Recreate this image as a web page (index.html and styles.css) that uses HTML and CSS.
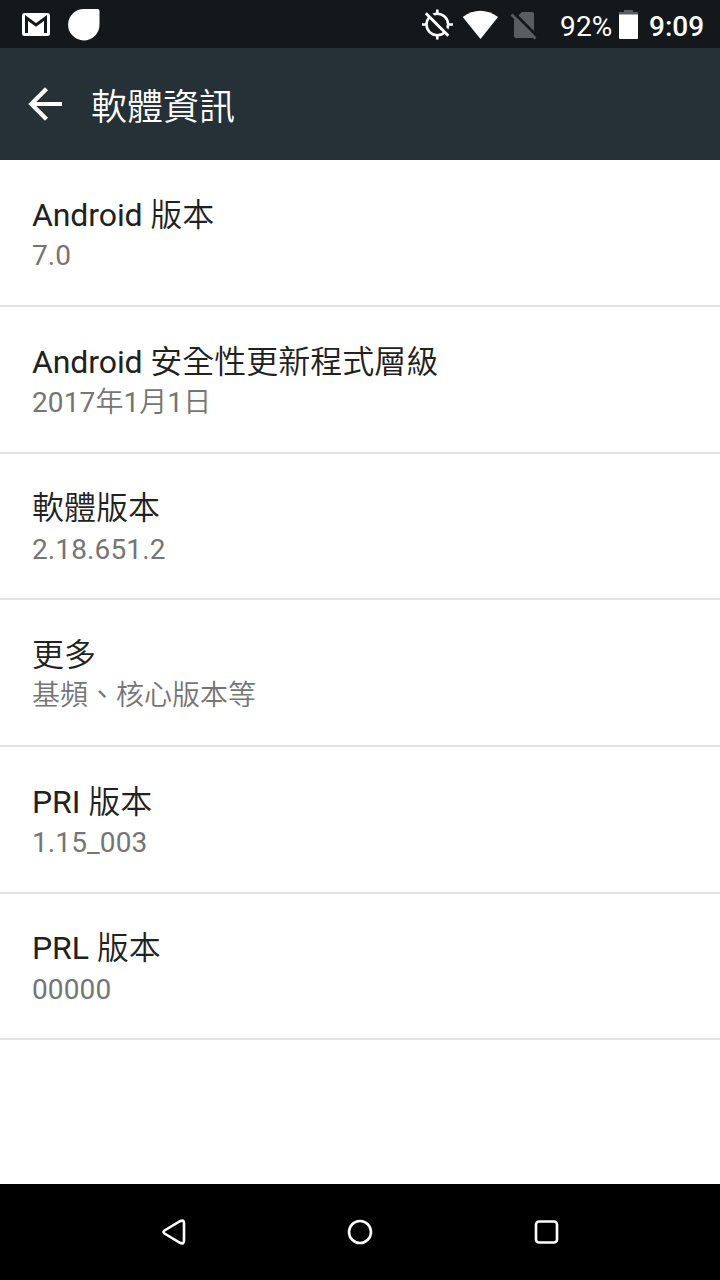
FILE: index.html
```
<!DOCTYPE html>
<html lang="zh-Hant">
<head>
<meta charset="utf-8">
<title>軟體資訊</title>
<link rel="stylesheet" href="styles.css">
</head>
<body>
<div class="screen">
  <header class="status-bar">
    <svg class="status-icons" width="110" height="48" viewBox="0 0 110 48">
      <rect x="22" y="13" width="28" height="23" rx="2.500" fill="#fff"/>
      <path d="M26.500 33V18L36 25L45.500 18V33" fill="none" stroke="#14181b" stroke-width="3"/>
      <path d="M84 9H97.500Q99.500 9 99.500 11V25A15.700 15.700 0 1 1 84 9Z" fill="#fff"/>
    </svg>
    <div class="status-right">
      <svg class="status-icons" width="130" height="48" viewBox="0 0 130 48">
        <g fill="none" stroke="#fff" stroke-width="2.600">
          <circle cx="17.300" cy="24.500" r="10.800"/>
          <path d="M17.300 9.500V14M17.300 35V39.500M2 24.500H7M28 24.500H33"/>
        </g>
        <path d="M7 11L30 34" stroke="#14181b" stroke-width="4"/>
        <path d="M5.800 13.200L28.300 35.700" stroke="#fff" stroke-width="2.800"/>
        <path d="M42.700 17Q60.300 4.500 78 17L60.500 39Z" fill="#fff"/>
        <path d="M102 12H112Q114 12 114 14V36Q114 38 112 38H96Q94 38 94 36V20Z" fill="#5b5e60"/>
        <path d="M93.500 12.500L118 37" stroke="#14181b" stroke-width="3"/>
        <path d="M91.500 14.500L115.500 38.500" stroke="#5b5e60" stroke-width="2.600"/>
      </svg>
      <span class="battery-level">92%</span>
      <svg class="battery" width="20" height="48" viewBox="0 0 20 48">
        <path d="M5 10H14V12H19V15H0V12H5Z" fill="#5b5e60"/>
        <path d="M0 14.500H19V38Q19 39 18 39H1Q0 39 0 38Z" fill="#fff"/>
      </svg>
      <span class="clock">9:09</span>
    </div>
  </header>
  <div class="app-bar">
    <svg class="back" width="36" height="36" viewBox="0 0 36 36">
      <path d="M34 18H4M18.500 2.800L3.300 18L18.500 33.200" fill="none" stroke="#fff" stroke-width="4.200"/>
    </svg>
    <h1 class="title">軟體資訊</h1>
  </div>
  <main class="list">
    <section class="row"><div class="name">Android <span class="han">版本</span></div><div class="value">7.0</div></section>
    <section class="row"><div class="name">Android <span class="han">安全性更新程式層級</span></div><div class="value">2017<span class="han">年</span>1<span class="han">月</span>1<span class="han">日</span></div></section>
    <section class="row"><div class="name"><span class="han">軟體版本</span></div><div class="value">2.18.651.2</div></section>
    <section class="row"><div class="name"><span class="han">更多</span></div><div class="value"><span class="han">基頻、核心版本等</span></div></section>
    <section class="row"><div class="name">PRI <span class="han">版本</span></div><div class="value">1.15_003</div></section>
    <section class="row"><div class="name">PRL <span class="han">版本</span></div><div class="value">00000</div></section>
  </main>
  <nav class="nav-bar">
    <svg class="nav-icon" width="28" height="28" viewBox="0 0 28 28"><path d="M4.500 12.500L20 3.200Q24 1.500 24 5V23Q24 26.500 20 24.800L4.500 15.500Q2.500 14 4.500 12.500Z"/></svg>
    <svg class="nav-icon" width="28" height="28" viewBox="0 0 28 28"><circle cx="14" cy="14" r="11"/></svg>
    <svg class="nav-icon" width="28" height="28" viewBox="0 0 28 28"><rect x="3" y="3.500" width="21" height="21" rx="3"/></svg>
  </nav>
</div>
</body>
</html>
```
FILE: styles.css
```
body {
  margin: 0;
  background: #fff;
  font-family: Roboto, "Noto Sans CJK TC", sans-serif;
}
.screen {
  display: flex;
  flex-direction: column;
  width: 720px;
  height: 1280px;
}
.status-bar {
  display: flex;
  justify-content: space-between;
  height: 48px;
  background: #14181b;
  color: #fff;
}
.status-icons, .battery, .back, .nav-icon {
  display: block;
}
.status-right {
  display: flex;
  padding-right: 16px;
  line-height: 53px;
}
.battery-level {
  width: 53px;
  margin-left: 10px;
  font-size: 28px;
  letter-spacing: 0.2px;
  white-space: nowrap;
}
.battery {
  margin-left: 6px;
}
.clock {
  width: 55px;
  margin-left: 10px;
  font-size: 28px;
  font-weight: 500;
  white-space: nowrap;
}
.app-bar {
  display: flex;
  align-items: center;
  height: 112px;
  padding-left: 28px;
  background: #263137;
}
.title {
  margin: 0 0 0 27px;
  color: #fff;
  font-family: "Noto Sans CJK TC", sans-serif;
  font-size: 36px;
  font-weight: 350;
  line-height: 52px;
}
.list {
  flex: 1;
  padding-top: 0.4px;
}
.row {
  box-sizing: border-box;
  height: 146.67px;
  padding: 33.6px 32px 0;
  border-bottom: 2px solid #e2e2e2;
}
.name {
  height: 43.4px;
  color: #212121;
  font-size: 32px;
  line-height: 42px;
  letter-spacing: -0.1px;
}
.value {
  height: 38px;
  color: #757575;
  font-size: 28px;
  line-height: 38px;
  letter-spacing: 0.12px;
}
.han {
  font-family: "Noto Sans CJK TC", sans-serif;
  font-weight: 350;
  line-height: 1;
  letter-spacing: 0;
}
.nav-bar {
  display: flex;
  align-items: center;
  justify-content: center;
  gap: 158.500px;
  height: 96px;
  background: #000;
}
.nav-icon {
  fill: none;
  stroke: #fff;
  stroke-width: 2.600px;
}
```
